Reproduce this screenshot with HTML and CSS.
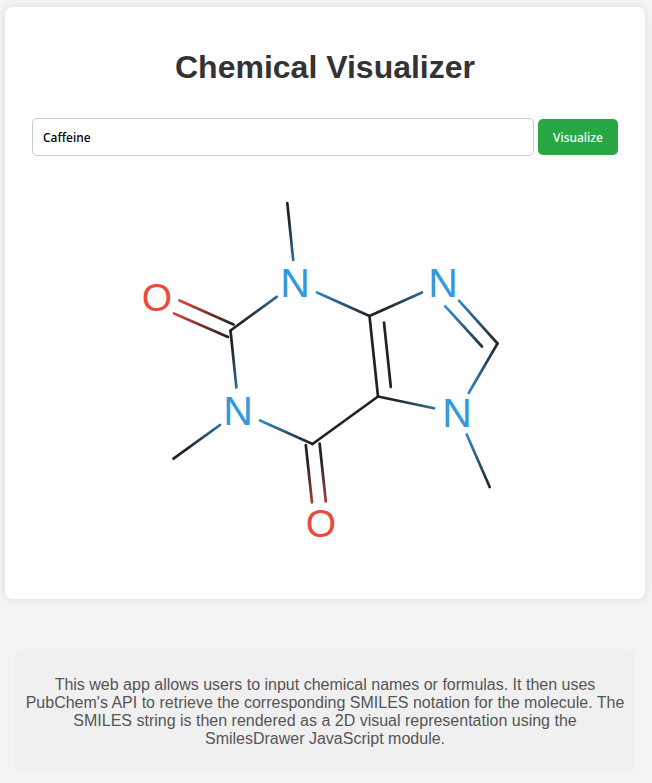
FILE: index.html
```html
<!DOCTYPE html>
<html lang="en">
<head>
<meta charset="utf-8">
<meta name="viewport" content="width=device-width, initial-scale=1">
<title>Chemical Visualizer</title>
<link rel="stylesheet" href="styles.css">
</head>
<body>
<main class="card">
  <h1 class="title">Chemical Visualizer</h1>
  <form class="search">
    <input class="search-input" type="text" value="Caffeine" aria-label="Chemical name or formula">
    <button class="search-button" type="button">Visualize</button>
  </form>
  <svg class="molecule" viewBox="75 176 500 403" role="img" aria-label="Caffeine">
    <defs>
      <linearGradient id="g1" gradientUnits="userSpaceOnUse" x1="287.3" y1="203" x2="295.5" y2="282.5"><stop offset="20%" stop-color="#222"/><stop offset="100%" stop-color="#3498db"/></linearGradient>
      <linearGradient id="g2" gradientUnits="userSpaceOnUse" x1="230.5" y1="330.5" x2="295.5" y2="282.5"><stop offset="20%" stop-color="#222"/><stop offset="100%" stop-color="#3498db"/></linearGradient>
      <linearGradient id="g3" gradientUnits="userSpaceOnUse" x1="157" y1="297.5" x2="230.5" y2="330.5"><stop offset="20%" stop-color="#e74c3c"/><stop offset="100%" stop-color="#222"/></linearGradient>
      <linearGradient id="g4" gradientUnits="userSpaceOnUse" x1="230.5" y1="330.5" x2="239" y2="411"><stop offset="20%" stop-color="#222"/><stop offset="100%" stop-color="#3498db"/></linearGradient>
      <linearGradient id="g5" gradientUnits="userSpaceOnUse" x1="173" y1="459" x2="239" y2="411"><stop offset="20%" stop-color="#222"/><stop offset="100%" stop-color="#3498db"/></linearGradient>
      <linearGradient id="g6" gradientUnits="userSpaceOnUse" x1="239" y1="411" x2="312.5" y2="444"><stop offset="20%" stop-color="#3498db"/><stop offset="100%" stop-color="#222"/></linearGradient>
      <linearGradient id="g7" gradientUnits="userSpaceOnUse" x1="312.5" y1="444" x2="321" y2="523.5"><stop offset="20%" stop-color="#222"/><stop offset="100%" stop-color="#e74c3c"/></linearGradient>
      <linearGradient id="g8" gradientUnits="userSpaceOnUse" x1="295.5" y1="282.5" x2="369.5" y2="316"><stop offset="20%" stop-color="#3498db"/><stop offset="100%" stop-color="#222"/></linearGradient>
      <linearGradient id="g9" gradientUnits="userSpaceOnUse" x1="369.5" y1="316" x2="443.5" y2="283"><stop offset="20%" stop-color="#222"/><stop offset="100%" stop-color="#3498db"/></linearGradient>
      <linearGradient id="g10" gradientUnits="userSpaceOnUse" x1="443.5" y1="283" x2="497.5" y2="343.5"><stop offset="20%" stop-color="#3498db"/><stop offset="100%" stop-color="#222"/></linearGradient>
      <linearGradient id="g11" gradientUnits="userSpaceOnUse" x1="497.5" y1="343.5" x2="457.5" y2="413"><stop offset="0%" stop-color="#222"/><stop offset="80%" stop-color="#3498db"/></linearGradient>
      <linearGradient id="g12" gradientUnits="userSpaceOnUse" x1="378" y1="396.5" x2="457.5" y2="413"><stop offset="20%" stop-color="#222"/><stop offset="100%" stop-color="#3498db"/></linearGradient>
      <linearGradient id="g13" gradientUnits="userSpaceOnUse" x1="457.5" y1="413" x2="490" y2="487.5"><stop offset="20%" stop-color="#3498db"/><stop offset="100%" stop-color="#222"/></linearGradient>
    </defs>
    <g class="bonds">
      <path stroke="url(#g1)" d="M287.3 203 293.2 260"/>
      <path stroke="url(#g2)" d="M230.5 330.5 276.7 296.8"/>
      <path stroke="url(#g3)" d="M179.5 300.5 233.5 324.5M174 313.5 228 337"/>
      <path stroke="url(#g4)" d="M230.5 330.5 236.4 387.5"/>
      <path stroke="url(#g5)" d="M173.5 458.7 220 425"/>
      <path stroke="url(#g6)" d="M260 420.5 312.5 444"/>
      <path stroke="url(#g7)" d="M305.8 445 312 502.5M319.6 443.5 325.8 501.5"/>
      <path stroke="#222" d="M312.5 444 378 396.5M369.5 316 378 396.5M384 322.5 390.8 387"/>
      <path stroke="url(#g8)" d="M317 292.5 369.5 316"/>
      <path stroke="url(#g9)" d="M369.5 316 422 292.5"/>
      <path stroke="url(#g10)" d="M459 300.7 497.5 343.5M445.3 306.3 482 346.5"/>
      <path stroke="url(#g11)" d="M497.5 343.5 468.7 393"/>
      <path stroke="url(#g12)" d="M378 396.5 434 408.3"/>
      <path stroke="url(#g13)" d="M466.7 434.5 489.7 487"/>
    </g>
    <g class="atoms nitrogen">
      <text x="295" y="297">N</text>
      <text x="238" y="425">N</text>
      <text x="443" y="297">N</text>
      <text x="457" y="427">N</text>
    </g>
    <g class="atoms oxygen">
      <text x="157" y="311">O</text>
      <text x="321" y="537">O</text>
    </g>
  </svg>
</main>
<footer class="info">
  <p>This web app allows users to input chemical names or formulas. It then uses PubChem's API to retrieve the corresponding SMILES notation for the molecule. The SMILES string is then rendered as a 2D visual representation using the SmilesDrawer JavaScript module.</p>
</footer>
</body>
</html>
```
FILE: styles.css
```css
body {
  margin: 0;
  padding: 7px 7px 10px 5px;
  background: #f4f4f4;
  font-family: "Liberation Sans", Arial, sans-serif;
  text-align: center;
}

.card {
  box-sizing: border-box;
  max-width: 800px;
  margin: 0 auto;
  padding: 20px 27px;
  background: #fff;
  border-radius: 8px;
  box-shadow: 0 0 10px rgba(0, 0, 0, 0.1);
}

.title {
  margin: 22px 0 32px;
  font-size: 32px;
  line-height: 37px;
  color: #333;
}

.search {
  display: flex;
  align-items: center;
  gap: 4px;
}

.search-input,
.search-button {
  box-sizing: border-box;
  font-family: "Noto Sans", sans-serif;
  font-size: 12px;
  font-weight: 500;
  line-height: 16px;
  border-radius: 5px;
}

.search-input {
  flex: 1;
  min-width: 0;
  padding: 11px 10px 9px;
  border: 1px solid #ccc;
  background: #fff;
  color: #000;
}

.search-button {
  min-width: 80px;
  padding: 11px 14px 9px;
  border: 0;
  background: #28a745;
  color: #fff;
}

.molecule {
  display: block;
  width: 100%;
  max-width: 500px;
  margin: 20px auto 0;
}

.bonds {
  fill: none;
  stroke-width: 2.7;
  stroke-linecap: round;
}

.atoms {
  text-anchor: middle;
}

.nitrogen {
  font-size: 41px;
  fill: #3498db;
}

.oxygen {
  font-size: 39px;
  fill: #e74c3c;
}

.info {
  box-sizing: border-box;
  max-width: 780px;
  margin: 50px 10px 0;
  padding: 10px;
  background: #f0f0f0;
  border-radius: 8px;
  color: #555;
}

.info p {
  margin: 17px 0 15px;
  font-size: 16px;
  line-height: 18px;
}
```
